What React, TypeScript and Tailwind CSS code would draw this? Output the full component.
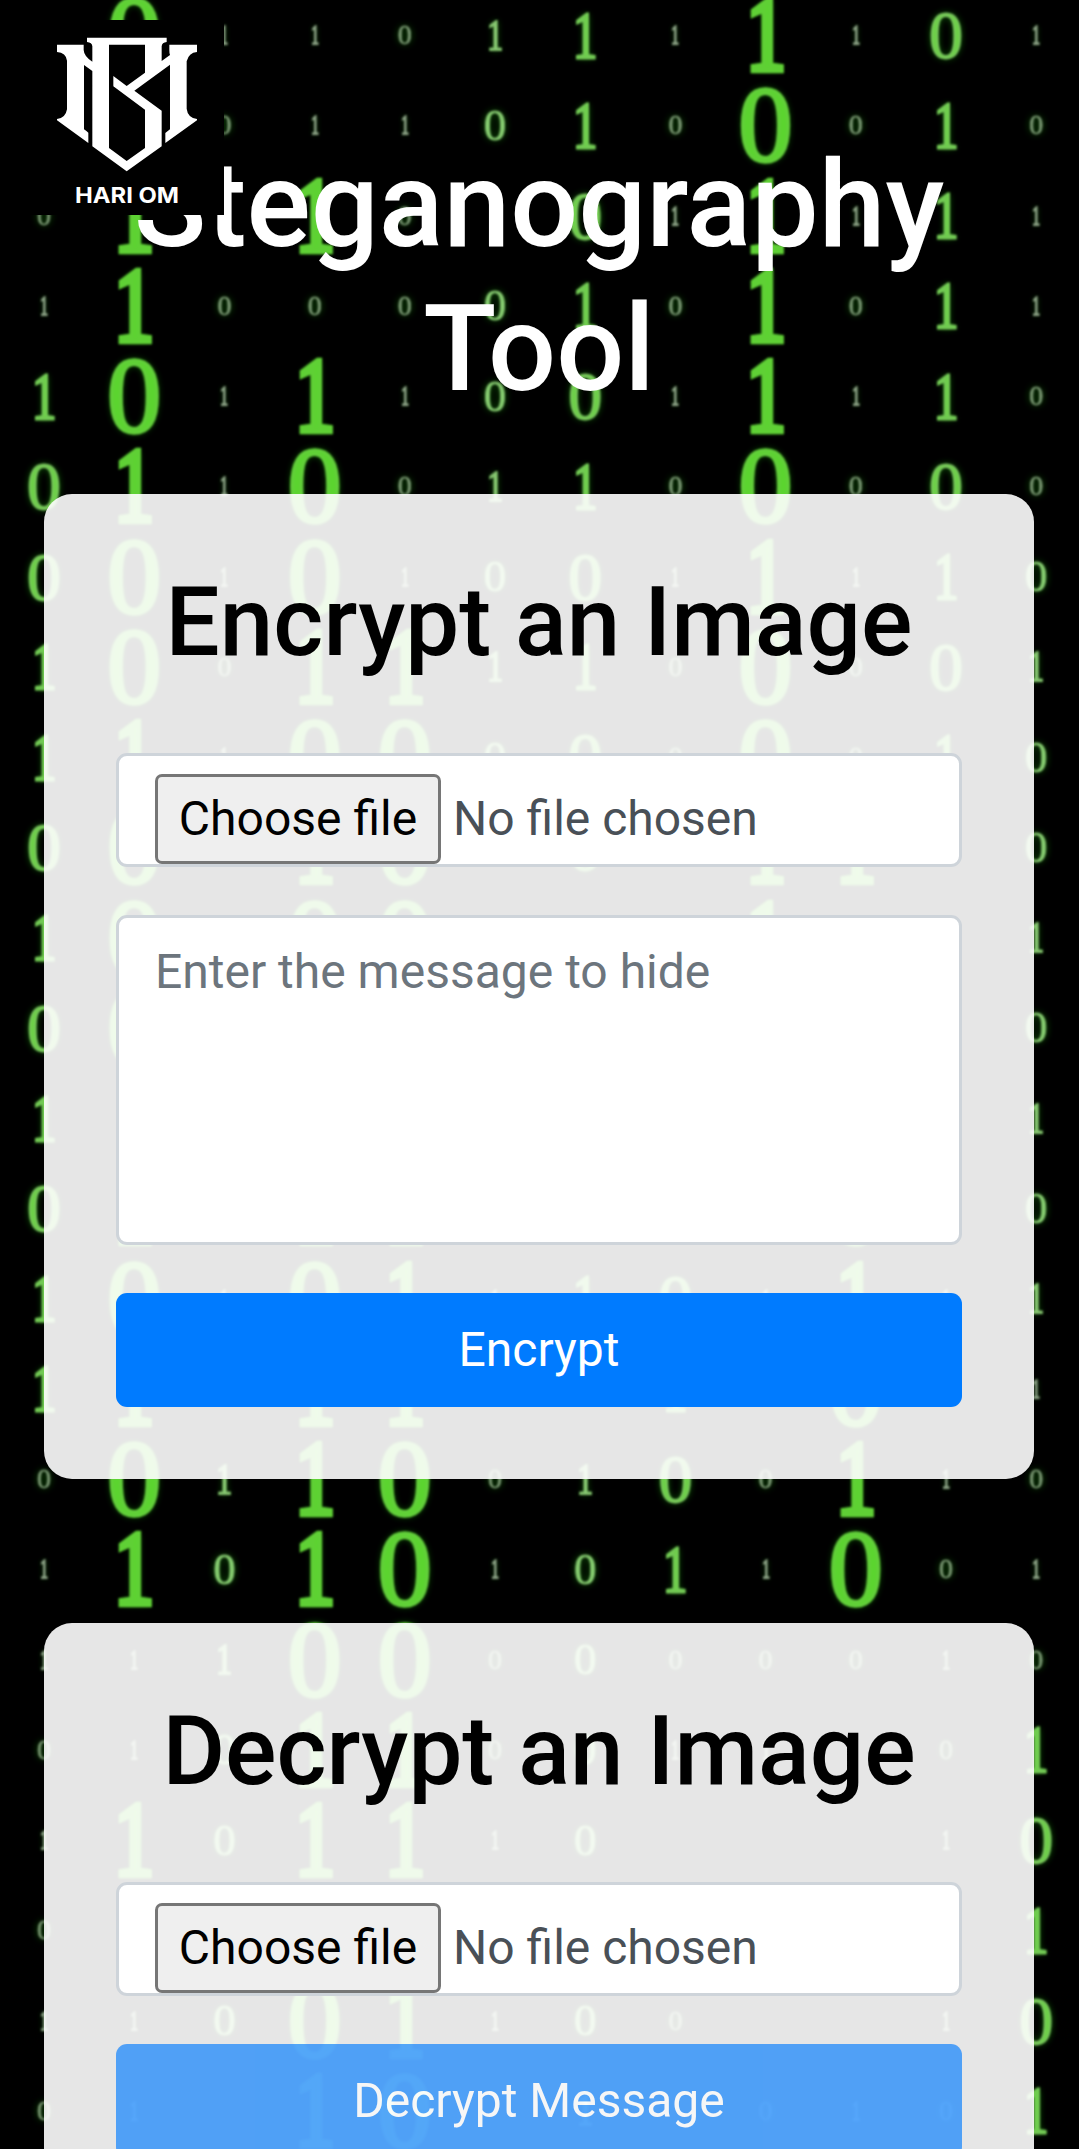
import React from "react";

// One string per row; each cell is a digit plus a size letter (a = smallest, d = largest).
const RAIN: string[] = [
  "-- 0d 1a 1a 0a 1b 1c 1a 1d 1a 0c 1a",
  "-- -- 0a 1a 1a 0b 1c 0a 0d 0a 1c 0a",
  "0a 1d -- 1d 0a -- 0c 1a 1d 1a 1c 1a",
  "1a 1d 0a 0a 0a 0b 1c 0a 1d 0a 1c 1a",
  "1c 0d 1a 1d 1a 0b 0c 1a 1d 1a 1c 0a",
  "0c 1d 1a 0d 0a 1b 1c 0a 0d 0a 0c 0a",
  "0c 0d 1a 0d 1a 0b 0c 1a 1d 1a 1c 0b",
  "1c 0d 0a 1d 1d 1b 1c 0a 0d 0a 0c 1b",
  "1c 1d 1a 0d 0d 0b 0c 0a 0d 0a 1c 0b",
  "0c 0d -- 1d 0d -- 0c -- 1d 1d -- 0b",
  "1c 0d -- 0d 0d -- -- -- 1d -- -- 1b",
  "0c 0d -- -- -- -- -- -- -- -- -- 0b",
  "1c -- -- -- -- -- -- -- -- -- -- 1b",
  "0c 1d -- 1d 1d -- -- -- -- 0d -- 0b",
  "1c 0d 1a 0d 1d 1a 1c 0c 1a 1d 1a 1b",
  "1c 1d -- 1d 1d -- -- 1c -- 0d -- 1a",
  "0a 0d 1b 1d 0d 0a 1b 0c 0a 1d 1a 0a",
  "1a 1d 0b 1d 0d 1a 0b 1c 1a 0d 0a 1a",
  "1a 1a 1b 0d 0d 0a 0b 0a 0a 0a 1a 0a",
  "0a 1a 0b 1d 1d 0a 0b 1a 1a -- 0a 1c",
  "1a 1d 0b 1d 1d 1a 0b -- -- -- 1a 0c",
  "0a -- -- -- -- -- -- -- -- -- -- 1c",
  "1a 1a 0b 0d 1d 1a 0b 0a -- -- 1a 0c",
  "0a 1a -- 1d 0d -- 1b -- 0a 1a 0a 1c",
];

const ZERO_STYLES: Record<string, string> = {
  a: "text-[28px] text-[#7f9c78] [-webkit-text-stroke:0.8px_#6c8a65]",
  b: "text-[45px] text-[#86cf70] [-webkit-text-stroke:1px_#78b565]",
  c: "text-[68px] text-[#6dd048] [-webkit-text-stroke:1.8px_#79c45e]",
  d: "text-[108px] text-[#5bd42f] [-webkit-text-stroke:3.5px_#62cf3a]",
};

// The digit 1 is condensed, with a heavier stem to keep its weight.
const ONE_STYLES: Record<string, string> = {
  a: "scale-x-[0.55] text-[28px] text-[#a3b59e] [-webkit-text-stroke:2px_#8aa084]",
  b: "scale-x-[0.7] text-[45px] text-[#8fd678] [-webkit-text-stroke:2.2px_#82c06d]",
  c: "scale-x-[0.74] text-[67px] text-[#6dd048] [-webkit-text-stroke:3px_#72c954]",
  d: "scale-x-[0.76] text-[106px] text-[#5bd42f] [-webkit-text-stroke:6.5px_#5fd035]",
};

function digitStyle(cell: string) {
  if (cell === "--") return "";
  return cell[0] === "1" ? ONE_STYLES[cell[1]] : ZERO_STYLES[cell[1]];
}

function DigitalRain() {
  return (
    <div aria-hidden="true" className="absolute inset-0 overflow-hidden bg-black">
      <div
        className="-mt-[10px] -ml-[1px] grid auto-rows-[90.26px] grid-cols-[repeat(12,90.2px)] blur-[0.9px]"
        style={{ fontFamily: '"Liberation Serif", serif' }}
      >
        {RAIN.flatMap((row, r) =>
          row.split(" ").map((cell, c) => (
            <span
              key={`${r}-${c}`}
              className={`flex items-center justify-center leading-none [text-shadow:0_0_7px_#137a08] ${digitStyle(cell)}`}
            >
              {cell === "--" ? "" : cell[0]}
            </span>
          )),
        )}
      </div>
    </div>
  );
}

function Logo() {
  return (
    <div className="absolute top-5 left-[29px] h-[195px] w-[195px] bg-black">
      <svg viewBox="0 0 585 585" className="h-full w-full">
        <g transform="translate(33 0)" fill="#fff" fillRule="evenodd">
          <path d="M141 53H380V66Q366 67 365 79V123L390 105Q388 101 388 90V74H471V96Q446 98 440 124V266Q443 293 471 297V301L376 369V339Q380 336 390 328V134L283 212L365 272V379L260 454L157 379V153L132 135V328Q140 334 145 338V369L51 301V297Q77 294 81 268V122Q78 98 51 96V74H131V90Q132 109 157 125V79Q156 67 141 66ZM207 74V384L260 423L315 384V269L220 199V168L260 198L315 158V74Z" />
          <text
            x="105"
            y="548"
            fontSize="64"
            fontWeight="700"
            textLength="312"
            lengthAdjust="spacingAndGlyphs"
            fontFamily="Inter, sans-serif"
          >
            HARI OM
          </text>
        </g>
      </svg>
    </div>
  );
}

function FilePicker() {
  return (
    <div className="flex h-[114px] w-full items-start rounded-[11px] border-3 border-[#ced4da] bg-white pt-[18px] pl-9 text-[#495057]">
      <button
        type="button"
        className="h-[90px] w-[286px] shrink-0 rounded-[7px] border-3 border-[#767676] bg-[#efefef] leading-[84px] whitespace-nowrap text-black"
      >
        Choose file
      </button>
      <span className="ml-3 leading-[90px] whitespace-nowrap">No file chosen</span>
    </div>
  );
}

function Card({ title, children }: { title: string; children: React.ReactNode }) {
  return (
    <section className="flex h-[985px] flex-col rounded-[28px] bg-white/90 p-[72px]">
      <h2 className="mb-[74px] text-center text-[96px] leading-[113px] font-medium whitespace-nowrap text-black">
        {title}
      </h2>
      {children}
    </section>
  );
}

export default function App() {
  return (
    <div
      className="relative h-[2149px] w-[1079px] overflow-hidden text-[48px]"
      style={{ fontFamily: "Roboto, sans-serif" }}
    >
      <DigitalRain />
      <main className="relative flex flex-col px-[44px] pt-[133px] pr-[45px]">
        <h1 className="text-center text-[120px] leading-[144px] font-medium text-white">
          Steganography
          <br />
          Tool
        </h1>
        <div className="mt-[73px] flex flex-col gap-36">
          <Card title="Encrypt an Image">
            <FilePicker />
            <textarea
              readOnly
              placeholder="Enter the message to hide"
              className="mt-12 block h-[330px] w-full resize-none rounded-[11px] border-3 border-[#ced4da] bg-white px-9 pt-[18px] leading-[72px] placeholder:text-[#6c757d]"
            />
            <button
              type="button"
              className="mt-12 h-[114px] w-full shrink-0 rounded-[11px] bg-[#007bff] text-white"
            >
              Encrypt
            </button>
          </Card>
          <Card title="Decrypt an Image">
            <FilePicker />
            <button
              type="button"
              disabled
              className="mt-12 h-[114px] w-full shrink-0 rounded-[11px] bg-[#007bff] text-white opacity-65"
            >
              Decrypt Message
            </button>
          </Card>
        </div>
      </main>
      <Logo />
    </div>
  );
}
